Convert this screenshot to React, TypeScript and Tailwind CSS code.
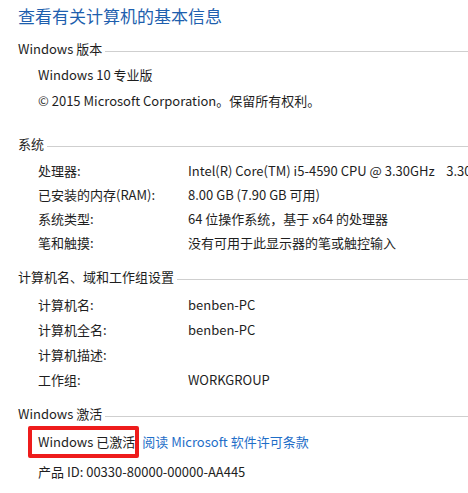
const font = { fontFamily: '"Noto Sans CJK SC", "Noto Sans", sans-serif' }

type Row = { label: string; value: string }

const systemRows: Row[] = [
  { label: '处理器:', value: 'Intel(R) Core(TM) i5-4590 CPU @ 3.30GHz\u00a0\u00a0\u00a0\u00a03.30GHz' },
  { label: '已安装的内存(RAM):', value: '8.00 GB (7.90 GB 可用)' },
  { label: '系统类型:', value: '64 位操作系统，基于 x64 的处理器' },
  { label: '笔和触摸:', value: '没有可用于此显示器的笔或触控输入' },
]

const computerRows: Row[] = [
  { label: '计算机名:', value: 'benben-PC' },
  { label: '计算机全名:', value: 'benben-PC' },
  { label: '计算机描述:', value: '' },
  { label: '工作组:', value: 'WORKGROUP' },
]

const SectionHeader = ({ title, className }: { title: string; className?: string }) => (
  <div className={`flex items-center gap-[3px] leading-[24px] ${className ?? ''}`}>
    <span className="whitespace-nowrap">{title}</span>
    <div className="mt-[4px] h-px flex-1 bg-[#cfcfcf]" />
  </div>
)

const InfoRows = ({ rows, rowHeight }: { rows: Row[]; rowHeight: string }) => (
  <div className="pl-[20px]">
    {rows.map((r) => (
      <div key={r.label} className={`flex whitespace-nowrap ${rowHeight}`}>
        <span className="w-[150px] shrink-0">{r.label}</span>
        <span>{r.value}</span>
      </div>
    ))}
  </div>
)

export default function App() {
  return (
    <div
      className="h-[493px] w-[468px] overflow-hidden bg-white pl-[18px] text-[13px] text-[#1e1e1e]"
      style={font}
    >
      <h1 className="mt-[4px] text-[17px] leading-[24px] text-[#1e5fae]">查看有关计算机的基本信息</h1>

      <SectionHeader title="Windows 版本" className="mt-[9px]" />
      <div className="mt-[1px] pl-[20px]">
        <div className="leading-[26px]">Windows 10 专业版</div>
        <div className="leading-[26px]">© 2015 Microsoft Corporation。保留所有权利。</div>
      </div>

      <SectionHeader title="系统" className="mt-[18px]" />
      <div className="mt-[3px]">
        <InfoRows rows={systemRows} rowHeight="leading-[24px]" />
      </div>

      <SectionHeader title="计算机名、域和工作组设置" className="mt-[10px]" />
      <div className="mt-[3px]">
        <InfoRows rows={computerRows} rowHeight="h-[25px] leading-[25px]" />
      </div>

      <SectionHeader title="Windows 激活" className="mt-[10px]" />
      <div className="mt-[4px] flex items-center pl-[20px] leading-[24px]">
        <span className="relative">
          Windows 已激活
          <span className="absolute -bottom-[4px] -left-[10px] -right-[4px] -top-[4px] rounded-[2px] border-4 border-[#ee1c1c]" />
        </span>
        <span className="ml-[7px] text-[#1e6ec8]">阅读 Microsoft 软件许可条款</span>
      </div>
      <div className="mt-[6px] pl-[20px] leading-[24px]">产品 ID: 00330-80000-00000-AA445</div>
    </div>
  )
}
